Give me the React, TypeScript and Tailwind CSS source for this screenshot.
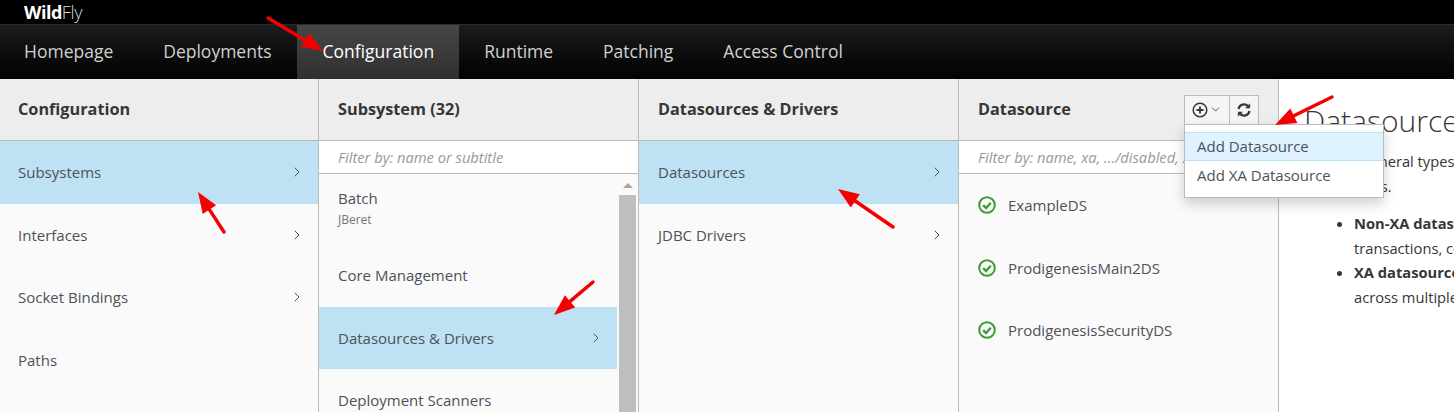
import { ChevronDown, ChevronRight } from 'lucide-react';

const font = "font-['Open_Sans','Liberation_Sans',sans-serif]";

const navItems = ['Homepage', 'Deployments', 'Configuration', 'Runtime', 'Patching', 'Access Control'];

function Arrow({ x1, y1, x2, y2 }: { x1: number; y1: number; x2: number; y2: number }) {
    const angle = Math.atan2(y2 - y1, x2 - x1);
    const len = 21;
    const wing = 8;
    const bx = x2 - Math.cos(angle) * len;
    const by = y2 - Math.sin(angle) * len;
    const nx = -Math.sin(angle) * wing;
    const ny = Math.cos(angle) * wing;
    return (
        <g fill="#f40000" stroke="#f40000">
            <line x1={x1} y1={y1} x2={bx} y2={by} strokeWidth="3.5" strokeLinecap="round" />
            <polygon points={`${x2},${y2} ${bx + nx},${by + ny} ${bx - nx},${by - ny}`} strokeWidth="0" />
        </g>
    );
}

function ColumnHeader({ title, children }: { title: string; children?: React.ReactNode }) {
    return (
        <div className="flex h-[62px] shrink-0 items-center justify-between border-b border-[#bbbbbb] bg-[#ededed] pl-[var(--pad)] pr-[19px]">
            <span className="text-[16.25px] font-bold text-[#363636]">{title}</span>
            {children}
        </div>
    );
}

function FilterBox({ text }: { text: string }) {
    return (
        <div className="flex h-[33px] shrink-0 items-center overflow-hidden whitespace-nowrap border-b border-[#bbbbbb] bg-white pl-[var(--pad)] text-[14.7px] italic text-[#999999]">
            {text}
        </div>
    );
}

function Item({ label, sub, active, chevron }: { label: string; sub?: string; active?: boolean; chevron?: boolean }) {
    return (
        <div className={`flex ${sub ? 'h-[70px]' : 'h-[62.5px]'} shrink-0 items-center justify-between pl-[var(--pad)] pr-[13px] ${active ? 'bg-[#bee1f4]' : ''}`}>
            <div>
                <div className="text-[15px] leading-[22px] text-[#4d5258]">{label}</div>
                {sub && <div className="text-[12px] leading-[22px] text-[#72767b]">{sub}</div>}
            </div>
            {chevron && <ChevronRight className="h-4 w-4 text-[#4d5258]" strokeWidth={1.5} />}
        </div>
    );
}

function StatusItem({ label }: { label: string }) {
    return (
        <div className="flex h-[62.5px] shrink-0 items-center gap-[12px] pl-[var(--pad)]">
            <svg width="18" height="18" viewBox="0 0 18 18" fill="none">
                <circle cx="9" cy="9" r="7.8" stroke="#3f9c35" strokeWidth="2" />
                <path d="M5.2 9.2 L8 12 L12.8 6.8" stroke="#3f9c35" strokeWidth="2.4" />
            </svg>
            <span className="text-[15px] text-[#4d5258]">{label}</span>
        </div>
    );
}

export default function App() {
    return (
        <div className={`relative h-[412px] w-[1454px] overflow-hidden bg-white ${font}`}>
            <div className="flex h-[24px] items-center bg-black pl-[24px] text-[18px] leading-none text-white">
                <span className="font-bold tracking-[-0.5px]">Wild</span>
                <span className="font-light text-[#d8d8d8] tracking-[-0.3px]">Fly</span>
            </div>

            <nav className="flex h-[55px] border-t border-[#2a2a2a] bg-gradient-to-b from-[#1c1c1c] to-[#030303]">
                {navItems.map((item) => (
                    <div
                        key={item}
                        className={`flex items-center pb-[2px] text-[17.5px] first:pl-[24px] ${item === 'Configuration' ? 'bg-gradient-to-b from-[#474747] to-[#2f2f2f] pl-[26px] pr-[25px] text-white' : 'px-[25px] text-[#d1d1d1]'}`}
                    >
                        {item}
                    </div>
                ))}
            </nav>

            <div className="flex h-[333px]">
                <section className="flex w-[319px] shrink-0 flex-col border-r border-[#bbbbbb] bg-[#fafafa] [--pad:18px]">
                    <ColumnHeader title="Configuration" />
                    <Item label="Subsystems" active chevron />
                    <Item label="Interfaces" chevron />
                    <Item label="Socket Bindings" chevron />
                    <Item label="Paths" />
                </section>

                <section className="flex w-[320px] shrink-0 flex-col overflow-hidden border-r border-[#bbbbbb] bg-[#fafafa] [--pad:19px]">
                    <ColumnHeader title="Subsystem (32)" />
                    <FilterBox text="Filter by: name or subtitle" />
                    <div className="flex min-h-0 flex-1">
                        <div className="flex w-[298px] shrink-0 flex-col">
                            <Item label="Batch" sub="JBeret" />
                            <Item label="Core Management" />
                            <Item label="Datasources & Drivers" active chevron />
                            <Item label="Deployment Scanners" />
                        </div>
                        <div className="flex w-[21px] flex-col items-center">
                            <div className="mt-[9px] h-0 w-0 border-x-[5px] border-b-[5px] border-x-transparent border-b-[#a8a8a8]" />
                            <div className="mt-[7px] w-[17px] flex-1 bg-[#bebebe]" />
                        </div>
                    </div>
                </section>

                <section className="flex w-[320px] shrink-0 flex-col border-r border-[#bbbbbb] bg-[#fafafa] [--pad:19px]">
                    <ColumnHeader title="Datasources & Drivers" />
                    <Item label="Datasources" active chevron />
                    <Item label="JDBC Drivers" chevron />
                </section>

                <section className="flex w-[320px] shrink-0 flex-col overflow-hidden border-r border-[#bbbbbb] bg-[#fafafa] [--pad:19px]">
                    <ColumnHeader title="Datasource">
                        <div className="flex h-[30px] items-stretch border border-[#bbbbbb] bg-[#f5f5f5] text-[#4d5258]">
                            <div className="flex w-[45px] items-center justify-center gap-[1px] border-r border-[#bbbbbb]">
                                <svg width="16" height="16" viewBox="0 0 16 16" fill="none" stroke="#363636">
                                    <circle cx="8" cy="8" r="6.8" strokeWidth="1.5" />
                                    <path d="M8 4.5 V11.5 M4.5 8 H11.5" strokeWidth="1.8" />
                                </svg>
                                <ChevronDown className="h-[13px] w-[13px]" strokeWidth={1.8} />
                            </div>
                            <div className="flex w-[28px] items-center justify-center">
                                <svg width="14" height="14" viewBox="0 0 14 14" fill="none" stroke="#363636" strokeWidth="2.2">
                                    <path d="M1.5 6 A5.5 5.5 0 0 1 11 3.2" />
                                    <path d="M12.5 8 A5.5 5.5 0 0 1 3 10.8" />
                                    <path d="M12.8 0.8 V5 H8.6 Z" fill="#363636" strokeWidth="0.5" />
                                    <path d="M1.2 13.2 V9 H5.4 Z" fill="#363636" strokeWidth="0.5" />
                                </svg>
                            </div>
                        </div>
                    </ColumnHeader>
                    <FilterBox text="Filter by: name, xa, .../disabled, .../enabled" />
                    <StatusItem label="ExampleDS" />
                    <StatusItem label="ProdigenesisMain2DS" />
                    <StatusItem label="ProdigenesisSecurityDS" />
                </section>

                <section className="min-w-0 flex-1 overflow-hidden pl-[25px] pt-[20px] text-[14.7px] text-[#363636]">
                    <h1 className="whitespace-nowrap text-[30px] font-light leading-[44px] text-[#363636]">Datasources</h1>
                    <p className="mt-[6px] w-[400px] leading-[25px]">
                        The two general types of
                        <br />
                        datasources.
                    </p>
                    <ul className="ml-[50px] mt-[12px] list-disc whitespace-nowrap leading-[24.7px]">
                        <li>
                            <b>Non-XA datasources</b>
                            <br />
                            transactions, commonly
                        </li>
                        <li>
                            <b>XA datasources</b>
                            <br />
                            across multiple
                        </li>
                    </ul>
                </section>
            </div>

            <div className="absolute left-[1184px] top-[124px] w-[200px] border border-[#bbbbbb] bg-white py-[7px] text-[15px] text-[#4d5258] shadow-[0_6px_12px_rgba(0,0,0,0.18)]">
                <div className="flex h-[29px] items-center border-y border-[#bee1f4] bg-[#def3ff] pl-[12px]">Add Datasource</div>
                <div className="flex h-[29px] items-center pl-[12px]">Add XA Datasource</div>
            </div>

            <svg className="pointer-events-none absolute left-0 top-0" width="1454" height="412">
                <Arrow x1={268} y1={18} x2={323} y2={51} />
                <Arrow x1={224} y1={232} x2={198} y2={192} />
                <Arrow x1={593} y1={282} x2={554} y2={315} />
                <Arrow x1={893} y1={227} x2={838} y2={189} />
                <Arrow x1={1332} y1={97} x2={1275} y2={125} />
            </svg>
        </div>
    );
}
